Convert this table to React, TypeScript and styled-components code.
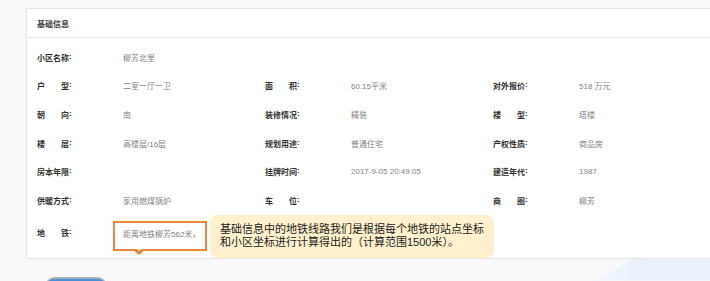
import styled, { createGlobalStyle } from "styled-components";

const GlobalStyle = createGlobalStyle`
  body {
    margin: 0;
    background: #f7f9fa;
    overflow: hidden;
    font-family: "Liberation Sans", "Noto Sans CJK SC", sans-serif;
  }
`;

const Page = styled.div`
  padding: 8px 0 0 26px;
  width: 684px;
  height: 273px;
  display: flex;
  flex-direction: column;
  overflow: hidden;
`;

const Panel = styled.section`
  width: 700px;
  background: #fff;
  border: 1px solid #e3e7eb;
  border-right: none;
  flex-shrink: 0;
`;

const PanelHeader = styled.div`
  height: 28px;
  display: flex;
  align-items: center;
  padding-left: 10px;
  border-bottom: 1px solid #e6e8eb;
  font-size: 8px;
  font-weight: bold;
  color: #444;
`;

const PanelBody = styled.div`
  position: relative;
  padding: 5px 0 14px 10px;
`;

const Row = styled.div`
  position: relative;
  height: 28.67px;
  display: grid;
  grid-template-columns: repeat(3, 228px);
  align-items: center;
`;

const Field = styled.div`
  display: flex;
  align-items: center;
  font-size: 8px;
`;

const Label = styled.div`
  width: 86px;
  flex-shrink: 0;
  display: flex;
  font-weight: bold;
  color: #333;
`;

const LabelText = styled.span`
  display: inline-block;
  width: 32px;
  text-align: justify;
  text-align-last: justify;
`;

const Value = styled.div`
  color: #838383;
  white-space: nowrap;
`;

const SubwayBox = styled.div`
  position: relative;
  margin: 6px 0 0 -10px;
  padding: 5px 5px 7px 8px;
  line-height: 14px;
  border: 2px solid #e8863a;
  color: #838383;
  white-space: nowrap;

  &::before,
  &::after {
    content: "";
    position: absolute;
    width: 0;
    height: 0;
    border-style: solid;
    border-color: transparent;
  }

  &::before {
    left: 17px;
    top: 100%;
    border-width: 6px 7px 0;
    border-top-color: #e8863a;
  }

  &::after {
    left: 20px;
    top: calc(100% - 2px);
    border-width: 4px 4px 0;
    border-top-color: #fff;
  }
`;

const Callout = styled.div`
  position: absolute;
  left: 173px;
  top: 0;
  padding: 8px 10px;
  border-radius: 8px;
  background: #fff1cc;
  color: #222;
  font-size: 11px;
  line-height: 13.5px;
  white-space: nowrap;
  z-index: 2;
`;

const Footer = styled.div`
  height: 22px;
  display: flex;
  align-items: flex-start;
`;

const BlueButton = styled.div`
  margin: 18px 0 0 19px;
  width: 62px;
  height: 24px;
  box-sizing: border-box;
  border-radius: 10px;
  border-top: 2px solid #a9b0b8;
  background: #4a8fd6;
`;

const Decoration = styled.div`
  margin-left: auto;
  width: 113px;
  height: 100%;
  background: linear-gradient(90deg, #f3f7fc, #e8f0fa 40%);
  clip-path: polygon(36px 0, 100% 0, 100% 100%, 0 100%);
`;

type Pair = [string, string];

const rows: Pair[][] = [
  [["小区名称", "柳芳北里"]],
  [
    ["户型", "二室一厅一卫"],
    ["面积", "60.15平米"],
    ["对外报价", "518 万元"],
  ],
  [
    ["朝向", "南"],
    ["装修情况", "精装"],
    ["楼型", "塔楼"],
  ],
  [
    ["楼层", "高楼层/16层"],
    ["规划用途", "普通住宅"],
    ["产权性质", "商品房"],
  ],
  [
    ["房本年限", ""],
    ["挂牌时间", "2017-9-05 20:49:05"],
    ["建造年代", "1987"],
  ],
  [
    ["供暖方式", "家用燃煤锅炉"],
    ["车位", ""],
    ["商圈", "柳芳"],
  ],
];

const FieldLabel = ({ text }: { text: string }) => (
  <Label>
    <LabelText>{text}</LabelText>:
  </Label>
);

const App = () => {
  return (
    <>
      <GlobalStyle />
      <Page>
        <Panel>
          <PanelHeader>基础信息</PanelHeader>
          <PanelBody>
            {rows.map((row, i) => (
              <Row key={i}>
                {row.map(([label, value]) => (
                  <Field key={label}>
                    <FieldLabel text={label} />
                    <Value>{value}</Value>
                  </Field>
                ))}
              </Row>
            ))}
            <Row>
              <Field>
                <FieldLabel text="地铁" />
                <SubwayBox>距离地铁柳芳562米，</SubwayBox>
              </Field>
              <Callout>
                基础信息中的地铁线路我们是根据每个地铁的站点坐标
                <br />
                和小区坐标进行计算得出的（计算范围1500米）。
              </Callout>
            </Row>
          </PanelBody>
        </Panel>
        <Footer>
          <BlueButton />
          <Decoration />
        </Footer>
      </Page>
    </>
  );
};

export default App;
